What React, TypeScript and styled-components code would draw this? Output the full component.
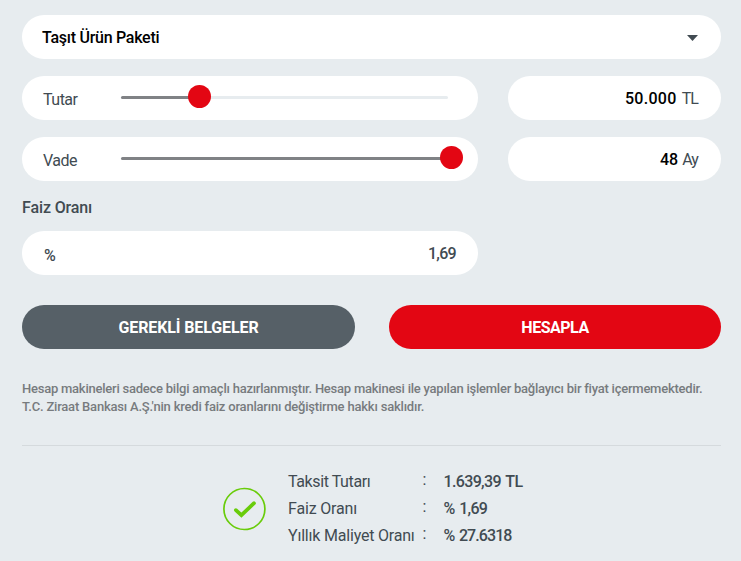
import React from "react";
import styled, { createGlobalStyle } from "styled-components";

const GlobalStyle = createGlobalStyle`
  * { box-sizing: border-box; }
  body {
    margin: 0;
    background: #e7ecef;
    color: #414b52;
    font-family: Roboto, "Liberation Sans", sans-serif;
    font-size: 16px;
    line-height: 20px;
  }
`;

const Page = styled.main`
  display: flex;
  flex-direction: column;
  width: 741px;
  height: 561px;
  padding: 15px 20px 0 22px;
  overflow: hidden;
  white-space: nowrap;
`;

const Pill = styled.div`
  display: flex;
  align-items: center;
  height: 44px;
  border-radius: 22px;
  background: #fff;
`;

const ProductSelect = styled(Pill).attrs({ role: "combobox" })`
  justify-content: space-between;
  padding: 0 23px 0 20px;
`;

const ProductName = styled.span`
  padding-top: 2px;
  color: #000;
  font-weight: 500;
  letter-spacing: -0.27px;
`;

const Caret = styled.svg`
  width: 11px;
  height: 6px;
  margin-top: 1px;
`;

const FieldRow = styled.div`
  display: grid;
  grid-template-columns: 456px 213px;
  column-gap: 30px;
  margin-top: 17px;
`;

const SliderField = styled(Pill)`
  padding-left: 21px;
`;

const SliderLabel = styled.span<{ $tracking: number }>`
  width: 78px;
  padding-top: 3px;
  letter-spacing: ${(p) => p.$tracking}px;
`;

const Track = styled.div`
  position: relative;
  width: 327px;
  height: 3px;
  margin-top: -1px;
  border-radius: 2px;
  background: #e7ecef;
`;

const TrackFill = styled.div<{ $width: number }>`
  width: ${(p) => p.$width}px;
  height: 3px;
  border-radius: 2px;
  background: #808285;
`;

const Thumb = styled.div<{ $left: number }>`
  position: absolute;
  top: -11px;
  left: ${(p) => p.$left}px;
  width: 23px;
  height: 23px;
  border-radius: 50%;
  background: #e30613;
`;

const ValueField = styled(Pill)`
  justify-content: flex-end;
  padding: 2px 22px 0 0;
`;

const Amount = styled.span<{ $tracking: number }>`
  color: #000;
  font-weight: 500;
  letter-spacing: ${(p) => p.$tracking}px;
`;

const Unit = styled.span<{ $gap: number }>`
  margin-left: ${(p) => p.$gap}px;
  margin-right: 1px;
  letter-spacing: -0.9px;
`;

const RateLabel = styled.h2`
  margin: 17px 0 13px;
  font-size: 16px;
  line-height: 20px;
  font-weight: 500;
  letter-spacing: -0.12px;
`;

const RateField = styled(Pill)`
  justify-content: space-between;
  width: 456px;
  padding: 2px 22px 0 22px;
  font-weight: 500;
`;

const PercentSign = styled.span`
  padding-top: 3px;
  font-size: 16px;
`;

const RateValue = styled.span`
  letter-spacing: -0.7px;
`;

const Actions = styled.div`
  display: grid;
  grid-template-columns: 333px 332px;
  column-gap: 34px;
  margin-top: 30px;
`;

const ActionButton = styled.button<{ $color: string; $tracking: number }>`
  height: 44px;
  padding: 2px 0 0;
  border: 0;
  border-radius: 22px;
  background: ${(p) => p.$color};
  color: #fff;
  font: 700 16px/20px Roboto, "Liberation Sans", sans-serif;
  letter-spacing: ${(p) => p.$tracking}px;
`;

const Note = styled.p`
  margin: 31px 0 0;
  color: #777b7e;
  font-size: 13px;
  line-height: 18px;
  font-weight: 500;
`;

const NoteLine = styled.span<{ $tracking: number }>`
  display: block;
  letter-spacing: ${(p) => p.$tracking}px;
`;

const Divider = styled.hr`
  width: 100%;
  height: 1px;
  margin: 29px 0 0;
  border: 0;
  background: #d5dadd;
`;

const Summary = styled.section`
  display: flex;
  margin: 22px 0 0 200px;
`;

const SuccessIcon = styled.svg`
  width: 45px;
  height: 45px;
  margin: 18px 21px 0 0;
`;

const ResultList = styled.dl`
  margin: 0;
`;

const ResultRow = styled.div`
  display: grid;
  grid-template-columns: 134.5px 21px auto;
  line-height: 27px;
`;

const ResultName = styled.dt<{ $tracking: number }>`
  letter-spacing: ${(p) => p.$tracking}px;
`;

const Colon = styled.span`
  height: 27px;
  margin-top: -2px;
`;

const ResultValue = styled.dd<{ $tracking: number }>`
  margin: 0;
  font-weight: 500;
  letter-spacing: ${(p) => p.$tracking}px;
  word-spacing: 1.5px;
`;

const sliders = [
  { label: "Tutar", labelTracking: -0.5, fill: 78, thumb: 67, amount: "50.000", amountTracking: 0.3, unit: "TL", gap: 5 },
  { label: "Vade", labelTracking: -0.5, fill: 327, thumb: 319, amount: "48", amountTracking: 0, unit: "Ay", gap: 4 },
];

const results = [
  { name: "Taksit Tutarı", nameTracking: -0.4, value: "1.639,39 TL", valueTracking: -0.65 },
  { name: "Faiz Oranı", nameTracking: -0.17, value: "% 1,69", valueTracking: -0.75 },
  { name: "Yıllık Maliyet Oranı", nameTracking: -0.2, value: "% 27.6318", valueTracking: -0.92 },
];

export default function App() {
  return (
    <>
      <GlobalStyle />
      <Page>
        <ProductSelect>
          <ProductName>Taşıt Ürün Paketi</ProductName>
          <Caret viewBox="0 0 11 6">
            <path d="M0 0H11L5.5 6Z" fill="#414b52" />
          </Caret>
        </ProductSelect>

        {sliders.map((s) => (
          <FieldRow key={s.label}>
            <SliderField>
              <SliderLabel $tracking={s.labelTracking}>{s.label}</SliderLabel>
              <Track>
                <TrackFill $width={s.fill} />
                <Thumb $left={s.thumb} />
              </Track>
            </SliderField>
            <ValueField>
              <Amount $tracking={s.amountTracking}>{s.amount}</Amount>
              <Unit $gap={s.gap}>{s.unit}</Unit>
            </ValueField>
          </FieldRow>
        ))}

        <RateLabel>Faiz Oranı</RateLabel>
        <RateField>
          <PercentSign>%</PercentSign>
          <RateValue>1,69</RateValue>
        </RateField>

        <Actions>
          <ActionButton $color="#566067" $tracking={-0.11}>GEREKLİ BELGELER</ActionButton>
          <ActionButton $color="#e30613" $tracking={-0.5}>HESAPLA</ActionButton>
        </Actions>

        <Note>
          <NoteLine $tracking={-0.235}>
            Hesap makineleri sadece bilgi amaçlı hazırlanmıştır. Hesap makinesi ile yapılan işlemler bağlayıcı bir fiyat içermemektedir.
          </NoteLine>
          <NoteLine $tracking={-0.2}>
            T.C. Ziraat Bankası A.Ş.'nin kredi faiz oranlarını değiştirme hakkı saklıdır.
          </NoteLine>
        </Note>
        <Divider />

        <Summary>
          <SuccessIcon viewBox="0 0 45 45" fill="none" stroke="#69cc0a">
            <circle cx="22.4" cy="23" r="20.5" strokeWidth="1.7" />
            <path d="M13.9 24.1L19.4 29.2L32 17.2" strokeWidth="3.7" strokeLinecap="round" strokeLinejoin="miter" />
          </SuccessIcon>
          <ResultList>
            {results.map((r) => (
              <ResultRow key={r.name}>
                <ResultName $tracking={r.nameTracking}>{r.name}</ResultName>
                <Colon>:</Colon>
                <ResultValue $tracking={r.valueTracking}>{r.value}</ResultValue>
              </ResultRow>
            ))}
          </ResultList>
        </Summary>
      </Page>
    </>
  );
}
